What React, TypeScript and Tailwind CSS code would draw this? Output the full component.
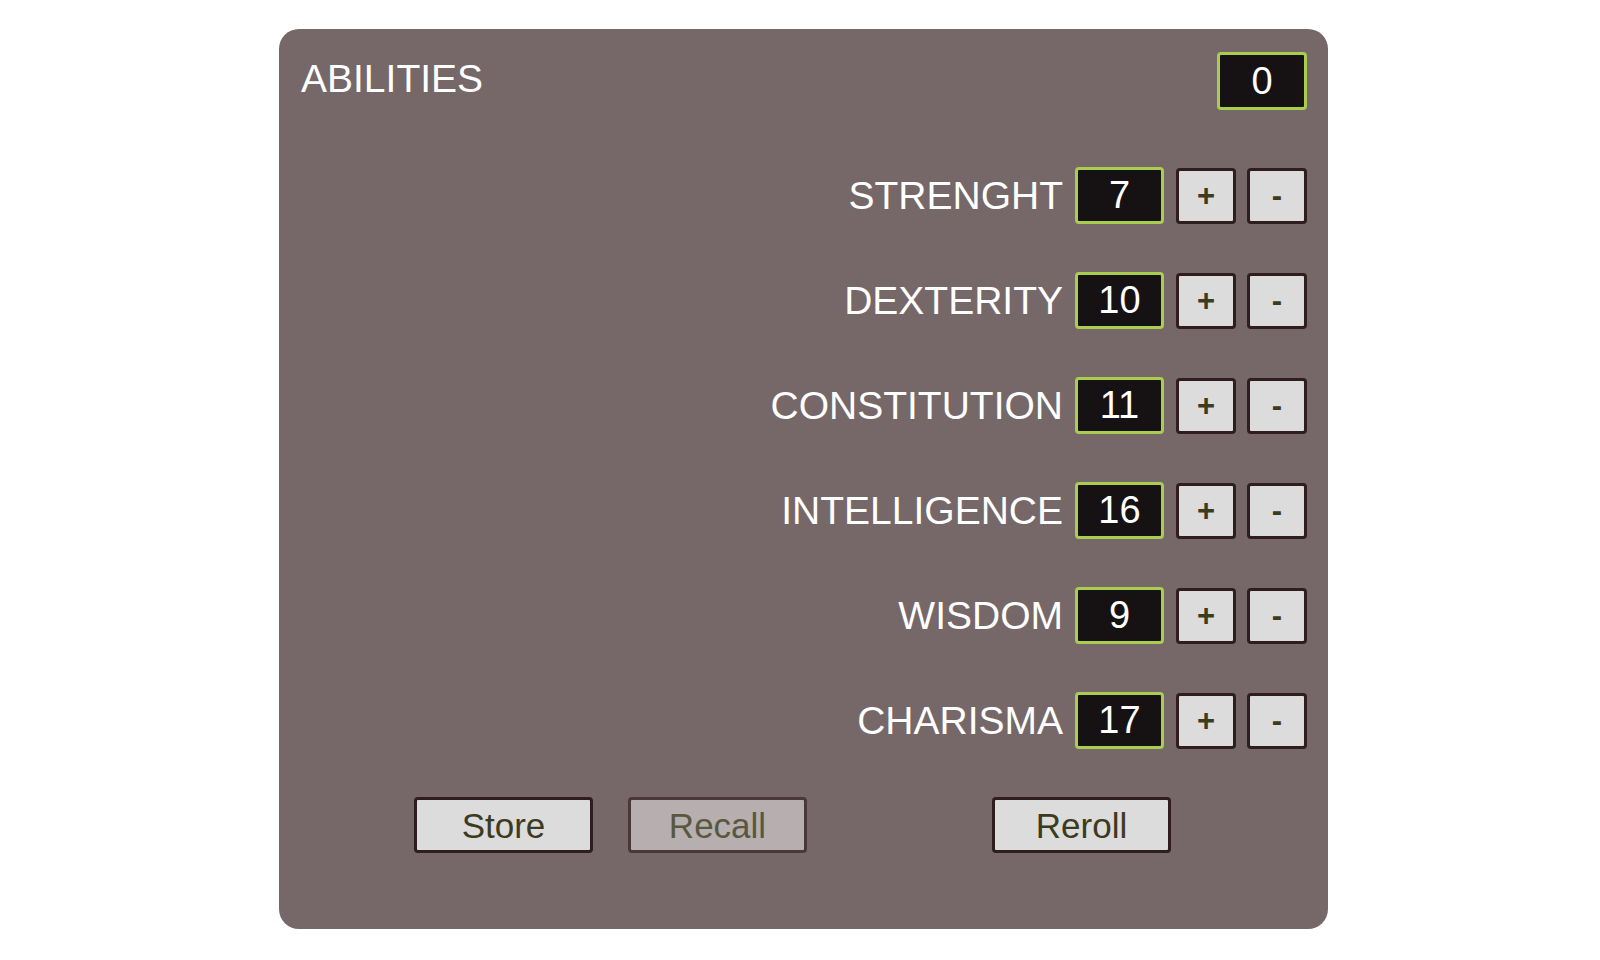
import React from 'react';

const abilities = [
  { name: 'STRENGHT', value: 7 },
  { name: 'DEXTERITY', value: 10 },
  { name: 'CONSTITUTION', value: 11 },
  { name: 'INTELLIGENCE', value: 16 },
  { name: 'WISDOM', value: 9 },
  { name: 'CHARISMA', value: 17 },
];

function StepButton({ label }: { label: string }) {
  return (
    <button className="w-[60px] h-[56px] flex items-center justify-center bg-[#dddcdc] border-[3px] border-[#2f1d20] rounded-[4px] text-[31px] font-bold leading-none text-[#3c3b1c]">
      {label}
    </button>
  );
}

function ValueBox({ value, wide }: { value: number; wide?: boolean }) {
  return (
    <div
      className={
        (wide ? 'w-[90px] h-[58px]' : 'w-[89px] h-[57px] mr-[12px]') +
        ' flex items-center justify-center bg-[#161213] border-[3px] border-[#a8cd4f] rounded-[4px] text-[38px] text-white'
      }
    >
      {value}
    </div>
  );
}

export default function App() {
  return (
    <div className="min-h-[960px] bg-white pt-[29px] font-['Liberation_Sans',Arial,sans-serif]">
      <div className="ml-[279px] w-[1049px] h-[900px] bg-[#766769] rounded-[20px] px-[21px] pt-[23px] flex flex-col">
        <div className="flex items-center justify-between h-[58px]">
          <h1 className="text-[39px] leading-none text-white ml-[1px] -mt-[5px]">ABILITIES</h1>
          <ValueBox value={0} wide />
        </div>

        <div className="mt-[57px] flex flex-col gap-[48px]">
          {abilities.map((a) => (
            <div key={a.name} className="flex items-center justify-end h-[57px]">
              <span className="text-[39px] leading-none text-white mr-[12px]">{a.name}</span>
              <ValueBox value={a.value} />
              <div className="flex gap-[11px]">
                <StepButton label="+" />
                <StepButton label="-" />
              </div>
            </div>
          ))}
        </div>

        <div className="mt-[48px] flex ml-[114px]">
          <button className="w-[179px] h-[56px] bg-[#dddcdc] border-[3px] border-[#2f1d20] rounded-[4px] text-[35px] text-[#3c3a20]">
            Store
          </button>
          <button className="ml-[35px] w-[179px] h-[56px] bg-[#b7afaf] border-[3px] border-[#4a3739] rounded-[4px] text-[35px] text-[#58573f]">
            Recall
          </button>
          <button className="ml-[185px] w-[179px] h-[56px] bg-[#dddcdc] border-[3px] border-[#2f1d20] rounded-[4px] text-[35px] text-[#3c3a20]">
            Reroll
          </button>
        </div>
      </div>
    </div>
  );
}
